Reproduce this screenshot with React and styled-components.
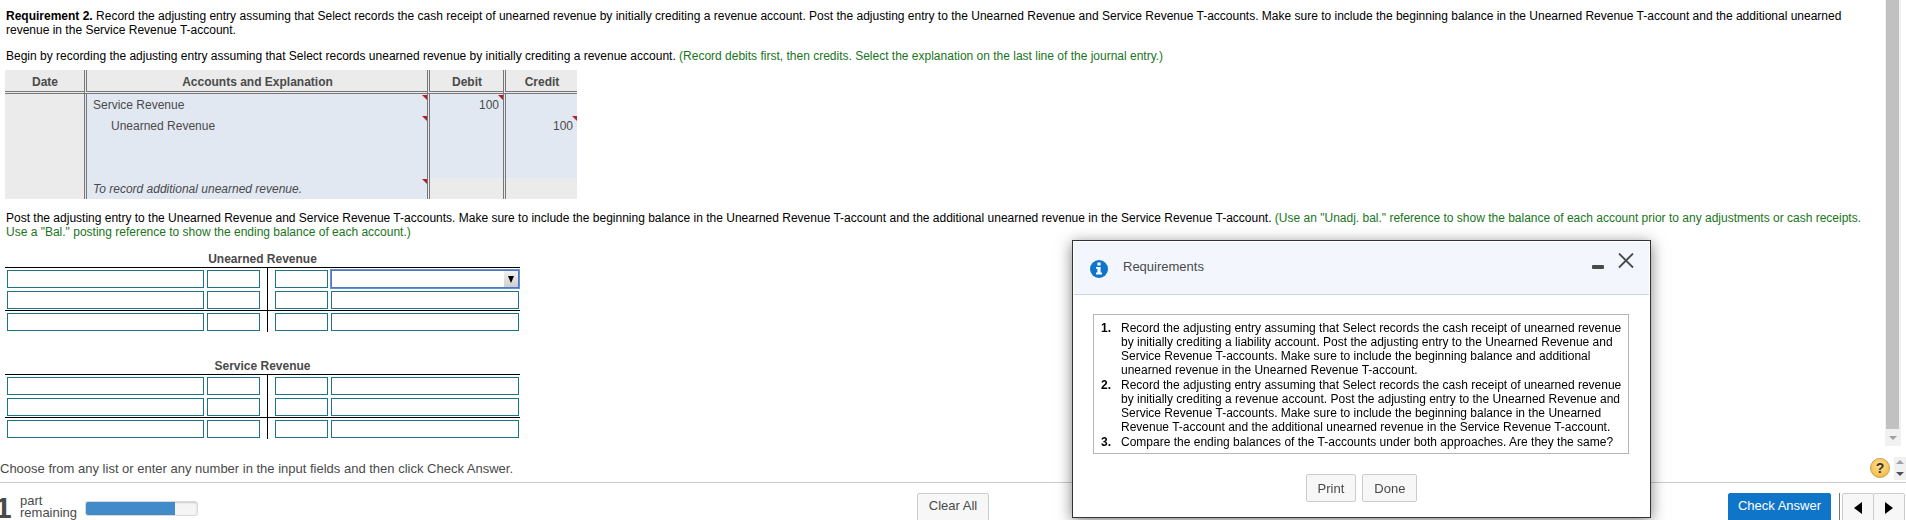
import { useState } from "react";

import styled, { createGlobalStyle } from "styled-components";

const colors = {
  text: "#000",
  muted: "#4a4a4a",
  hint: "#19751b",
  primary: "#0f75c9",
  teal: "#1e7487",
  cell: "#e2e8f2",
  grey: "#ebebeb",
  rule: "#777",
};

const GlobalStyle = createGlobalStyle`
  * {
    box-sizing: border-box;
  }

  body {
    margin: 0;
    background: #fff;
    color: ${colors.text};
    font-family: "Liberation Sans", Arial, sans-serif;
    font-size: 12px;
    line-height: 14px;
  }

  button,
  input,
  select {
    font-family: inherit;
  }
`;

const Page = styled.div`
  display: flex;
  flex-direction: column;
  height: 100vh;
  overflow: hidden;
`;

const Main = styled.main`
  display: flex;
  flex: 1;
  min-height: 0;
  padding-right: 5px;
`;

const Content = styled.div`
  flex: 1;
  min-width: 0;
  overflow: hidden;
  padding: 9px 0 0 5px;
`;

const Paragraph = styled.p`
  margin: 0 0 ${({ $gap }) => $gap}px;
  padding-left: 1px;
`;

const Hint = styled.span`
  color: ${colors.hint};
`;

const JournalTable = styled.table`
  width: 572px;
  table-layout: fixed;
  border-spacing: 0;
  margin-bottom: 12px;
  color: ${colors.muted};
  font-size: 12px;
  line-height: 14px;
`;

const JournalHead = styled.th`
  height: 24px;
  padding: 2px 0 0 1px;
  background: ${colors.grey};
  border-bottom: 3px double ${colors.rule};
  & + & {
    border-left: 3px double ${colors.rule};
  }
`;

const JournalCell = styled.td`
  position: relative;
  height: 21px;
  padding: 0 ${({ $amount }) => ($amount ? 4 : 0)}px 0
    ${({ $indent }) => ($indent ? 24 : 6)}px;
  background: ${({ $blank }) => ($blank ? colors.grey : colors.cell)};
  border-left: ${({ $first }) => ($first ? 0 : 3)}px double ${colors.rule};
  text-align: ${({ $amount }) => ($amount ? "right" : "left")};
  font-style: ${({ $note }) => ($note ? "italic" : "normal")};
`;

const Flag = styled.span`
  position: absolute;
  top: 1px;
  right: 0;
  width: 5px;
  height: 5px;
  background: #b5202c;
  clip-path: polygon(0 0, 100% 0, 100% 100%);
`;

const Account = styled.section`
  width: 515px;
  margin-bottom: 26px;
`;

const AccountTitle = styled.h2`
  margin: 0;
  padding: 1px 0;
  border-bottom: 1px solid #000;
  color: ${colors.muted};
  font-size: 12px;
  line-height: 14px;
  text-align: center;
`;

const AccountRow = styled.div`
  display: grid;
  grid-template-columns: 262px 1fr;
  border-top: ${({ $total }) => ($total ? 1 : 0)}px solid #000;
`;

const Side = styled.div`
  display: grid;
  grid-template-columns: ${({ $right }) =>
    $right ? "53px 1fr" : "197px 53px"};
  gap: 3px;
  padding: 2px 1px 1px ${({ $right }) => ($right ? 7 : 2)}px;
  border-left: ${({ $right }) => ($right ? "1px solid #000" : "0")};
`;

const Field = styled.input`
  width: 100%;
  height: 18px;
  padding: 0 3px;
  border: 1px solid ${colors.teal};
  background: #fff;
  font-size: 12px;
`;

const SelectWrapper = styled.div`
  position: relative;
  height: 18px;
`;

const Dropdown = styled.select`
  display: block;
  width: 100%;
  height: 18px;
  padding: 0 18px 0 3px;
  border: 1px solid #4f78c4;
  border-radius: 0;
  outline: 1px solid #6b8fd6;
  appearance: none;
  background: #fff;
`;

const DropdownArrow = styled.span`
  position: absolute;
  top: 1px;
  right: 1px;
  display: grid;
  place-items: center;
  width: 14px;
  height: 16px;
  background: linear-gradient(#f1f1f1, #cfcfcf);
  pointer-events: none;
`;

const ScrollTrack = styled.div`
  display: flex;
  flex-direction: column;
  width: 16px;
  padding: 0 2px 0 1px;
  background: #f1f1f1;
`;

const ScrollThumb = styled.div`
  flex: 1;
  background: #c1c1c1;
`;

const ScrollArrow = styled.div`
  display: grid;
  place-items: center;
  height: 17px;
`;

const HintBar = styled.div`
  display: flex;
  align-items: center;
  height: 37px;
  padding-top: 8px;
  border-bottom: 1px solid #c8ccd0;
  color: ${colors.muted};
  font-size: 13px;
  line-height: 15px;
  & > span {
    flex: 1;
  }
`;

const HelpButton = styled.button`
  width: 20px;
  height: 20px;
  margin-right: 4px;
  padding: 0;
  border: 1px solid #c9a04a;
  border-radius: 50%;
  background: radial-gradient(circle at 50% 35%, #ffe08a, #f0b53c);
  color: #333;
  font-size: 14px;
  font-weight: bold;
  line-height: 16px;
`;

const Spinner = styled.div`
  display: grid;
  place-items: center;
  width: 12px;
  height: 23px;
  background: #f1f1f1;
`;

const Footer = styled.footer`
  display: grid;
  grid-template-columns: 1fr auto 1fr;
  align-items: start;
  height: 37px;
  padding-top: 10px;
`;

const Progress = styled.div`
  display: flex;
  align-items: flex-start;
  color: ${colors.muted};
`;

const PartCount = styled.strong`
  width: 20px;
  margin-left: -5px;
  font-size: 30px;
  line-height: 30px;
`;

const PartLabel = styled.span`
  width: 70px;
  padding: 2px 0 0 5px;
  font-size: 13px;
  line-height: 12px;
`;

const ProgressTrack = styled.div`
  width: 113px;
  height: 15px;
  margin-top: 8px;
  border: 1px solid #d8d8d8;
  border-radius: 3px;
  background: #f5f5f5;
  box-shadow: inset 0 1px 2px #ccc;
  overflow: hidden;
`;

const ProgressFill = styled.div`
  height: 100%;
  background: #428bca;
`;

const Button = styled.button`
  height: 28px;
  padding: 0 11px;
  border: 1px solid #ccc;
  border-radius: 2px;
  background: #f7f7f7;
  color: ${colors.muted};
  font-size: 13px;
  line-height: 15px;
`;

const FooterButton = styled(Button)`
  height: 34px;
  padding-bottom: 10px;
`;

const CheckButton = styled(FooterButton)`
  padding-right: 9px;
  padding-left: 9px;
  border-color: ${colors.primary};
  background: ${colors.primary};
  color: #fff;
`;

const FooterActions = styled.div`
  display: flex;
  justify-content: flex-end;
  padding-right: 1px;
`;

const Pager = styled.div`
  display: flex;
  margin-left: 8px;
  padding-left: 2px;
  border-left: 1px solid #777;
`;

const PagerButton = styled.button`
  display: grid;
  place-items: center;
  width: 32px;
  height: 34px;
  padding: 0 0 4px;
  border: 1px solid #ccc;
  border-radius: 2px;
  background: #f7f7f7;
  & + & {
    margin-left: -1px;
  }
`;

const Dialog = styled.section`
  position: fixed;
  right: 255px;
  bottom: 2px;
  width: 579px;
  padding: 1px;
  border: 1px solid #333;
  background: #fff;
  box-shadow: 0 3px 14px rgba(0, 0, 0, 0.5);
`;

const DialogHeader = styled.header`
  display: flex;
  align-items: flex-start;
  height: 53px;
  padding: 11px 15px 0 16px;
  background: #f3f6fc;
  border-bottom: 1px solid #c6d9e6;
  color: ${colors.muted};
  & > svg {
    margin-top: 7px;
  }
`;

const DialogTitle = styled.h2`
  flex: 1;
  margin: 6px 0 0 15px;
  font-size: 13px;
  font-weight: normal;
  line-height: 16px;
`;

const IconButton = styled.button`
  display: block;
  height: 16px;
  margin-left: 14px;
  padding: 0;
  border: 0;
  background: none;
  color: ${colors.muted};
`;

const RequirementList = styled.ol`
  margin: 19px 20px 20px 19px;
  padding: 6px 2px 3px 7px;
  border: 1px solid #b5b5b5;
  list-style: none;
  counter-reset: requirement;
`;

const Requirement = styled.li`
  display: grid;
  grid-template-columns: 20px 1fr;
  margin-bottom: 1px;
  &::before {
    counter-increment: requirement;
    content: counter(requirement) ".";
    font-weight: bold;
  }
`;

const DialogActions = styled.div`
  display: flex;
  justify-content: center;
  gap: 6px;
  padding-bottom: 14px;
`;

const requirements = [
  "Record the adjusting entry assuming that Select records the cash receipt of unearned revenue by initially crediting a liability account. Post the adjusting entry to the Unearned Revenue and Service Revenue T-accounts. Make sure to include the beginning balance and additional unearned revenue in the Unearned Revenue T-account.",
  "Record the adjusting entry assuming that Select records the cash receipt of unearned revenue by initially crediting a revenue account. Post the adjusting entry to the Unearned Revenue and Service Revenue T-accounts. Make sure to include the beginning balance in the Unearned Revenue T-account and the additional unearned revenue in the Service Revenue T-account.",
  "Compare the ending balances of the T-accounts under both approaches. Are they the same?",
];

const entries = [
  { account: "Service Revenue", debit: "100" },
  { account: "Unearned Revenue", credit: "100", indent: true },
  {},
  {},
  { account: "To record additional unearned revenue.", note: true },
];

const Arrow = ({ direction, width, height, color = "#000" }) => {
  const points = {
    left: "10,0 10,10 0,5",
    right: "0,0 10,5 0,10",
    up: "0,10 5,0 10,10",
    down: "0,0 10,0 5,10",
  };

  return (
    <svg
      width={width}
      height={height}
      viewBox="0 0 10 10"
      preserveAspectRatio="none"
      aria-hidden="true"
    >
      <polygon points={points[direction]} fill={color} />
    </svg>
  );
};

const Journal = () => (
  <JournalTable>
    <colgroup>
      <col width="79" />
      <col width="343" />
      <col width="76" />
      <col width="74" />
    </colgroup>
    <thead>
      <tr>
        <JournalHead>Date</JournalHead>
        <JournalHead>Accounts and Explanation</JournalHead>
        <JournalHead>Debit</JournalHead>
        <JournalHead>Credit</JournalHead>
      </tr>
    </thead>
    <tbody>
      {entries.map(({ account, debit, credit, indent, note }, index) => (
        <tr key={`entry-${index}`}>
          <JournalCell $first $blank />
          <JournalCell $indent={indent} $note={note}>
            {account}
            {account && <Flag />}
          </JournalCell>
          <JournalCell $amount $blank={note}>
            {debit}
            {debit && <Flag />}
          </JournalCell>
          <JournalCell $amount $blank={note}>
            {credit}
            {credit && <Flag />}
          </JournalCell>
        </tr>
      ))}
    </tbody>
  </JournalTable>
);

const TAccount = ({ title, hasDropdown }) => (
  <Account>
    <AccountTitle>{title}</AccountTitle>
    {[1, 2, 3].map((row) => (
      <AccountRow key={`${title}-${row}`} $total={row === 3}>
        <Side>
          <Field aria-label={`${title} debit reference ${row}`} />
          <Field aria-label={`${title} debit amount ${row}`} />
        </Side>
        <Side $right>
          <Field aria-label={`${title} credit amount ${row}`} />
          {hasDropdown && row === 1 ? (
            <SelectWrapper>
              <Dropdown aria-label={`${title} credit reference ${row}`}>
                <option value="" />
              </Dropdown>
              <DropdownArrow>
                <Arrow direction="down" width={6} height={7} />
              </DropdownArrow>
            </SelectWrapper>
          ) : (
            <Field aria-label={`${title} credit reference ${row}`} />
          )}
        </Side>
      </AccountRow>
    ))}
  </Account>
);

const RequirementsDialog = ({ onClose }) => (
  <Dialog role="dialog" aria-labelledby="requirements-title">
    <DialogHeader>
      <svg width="18" height="18" viewBox="0 0 18 18" aria-hidden="true">
        <circle cx="9" cy="9" r="9" fill={colors.primary} />
        <path
          d="M7.4 2.6h3.2v2.8H7.4zM6 7h4.6v5.6H12v1.8H6v-1.8h1.4V8.8H6z"
          fill="#fff"
        />
      </svg>
      <DialogTitle id="requirements-title">Requirements</DialogTitle>
      <IconButton aria-label="Minimize">
        <svg width="12" height="16" viewBox="0 0 12 16">
          <rect y="12" width="12" height="4" rx="1" fill="currentColor" />
        </svg>
      </IconButton>
      <IconButton aria-label="Close" onClick={onClose}>
        <svg width="16" height="16" viewBox="0 0 16 16">
          <path
            d="M1 0.5L15 14.5M15 0.5L1 14.5"
            stroke="currentColor"
            strokeWidth="1.8"
          />
        </svg>
      </IconButton>
    </DialogHeader>
    <RequirementList>
      {requirements.map((requirement, index) => (
        <Requirement key={`requirement-${index}`}>{requirement}</Requirement>
      ))}
    </RequirementList>
    <DialogActions>
      <Button>Print</Button>
      <Button onClick={onClose}>Done</Button>
    </DialogActions>
  </Dialog>
);

const App = () => {
  const [isDialogOpen, setIsDialogOpen] = useState(true);
  const progress = 80;

  return (
    <Page>
      <GlobalStyle />
      <Main>
        <Content>
          <Paragraph $gap={12}>
            <b>Requirement 2.</b> Record the adjusting entry assuming that
            Select records the cash receipt of unearned revenue by initially
            crediting a revenue account. Post the adjusting entry to the
            Unearned Revenue and Service Revenue T-accounts. Make sure to
            include the beginning balance in the Unearned Revenue T-account and
            the additional unearned revenue in the Service Revenue T-account.
          </Paragraph>
          <Paragraph $gap={7}>
            Begin by recording the adjusting entry assuming that Select records
            unearned revenue by initially crediting a revenue account.{" "}
            <Hint>
              (Record debits first, then credits. Select the explanation on the
              last line of the journal entry.)
            </Hint>
          </Paragraph>
          <Journal />
          <Paragraph $gap={12}>
            Post the adjusting entry to the Unearned Revenue and Service Revenue
            T-accounts. Make sure to include the beginning balance in the
            Unearned Revenue T-account and the additional unearned revenue in
            the Service Revenue T-account.{" "}
            <Hint>
              (Use an "Unadj. bal." reference to show the balance of each
              account prior to any adjustments or cash receipts. Use a "Bal."
              posting reference to show the ending balance of each account.)
            </Hint>
          </Paragraph>
          <TAccount title="Unearned Revenue" hasDropdown />
          <TAccount title="Service Revenue" />
        </Content>
        <ScrollTrack>
          <ScrollThumb />
          <ScrollArrow>
            <Arrow direction="down" width={8} height={4} color="#a0a0a0" />
          </ScrollArrow>
        </ScrollTrack>
      </Main>
      <HintBar>
        <span>
          Choose from any list or enter any number in the input fields and then
          click Check Answer.
        </span>
        <HelpButton aria-label="Help">?</HelpButton>
        <Spinner>
          <Arrow direction="up" width={8} height={4} color="#a0a0a0" />
          <Arrow direction="down" width={8} height={4} color="#505050" />
        </Spinner>
      </HintBar>
      <Footer>
        <Progress>
          <PartCount>1</PartCount>
          <PartLabel>
            part
            <br />
            remaining
          </PartLabel>
          <ProgressTrack>
            <ProgressFill style={{ width: `${progress}%` }} />
          </ProgressTrack>
        </Progress>
        <FooterButton>Clear All</FooterButton>
        <FooterActions>
          <CheckButton>Check Answer</CheckButton>
          <Pager>
            <PagerButton aria-label="Previous">
              <Arrow direction="left" width={8} height={12} />
            </PagerButton>
            <PagerButton aria-label="Next">
              <Arrow direction="right" width={8} height={12} />
            </PagerButton>
          </Pager>
        </FooterActions>
      </Footer>
      {isDialogOpen && (
        <RequirementsDialog onClose={() => setIsDialogOpen(false)} />
      )}
    </Page>
  );
};

export default App;
